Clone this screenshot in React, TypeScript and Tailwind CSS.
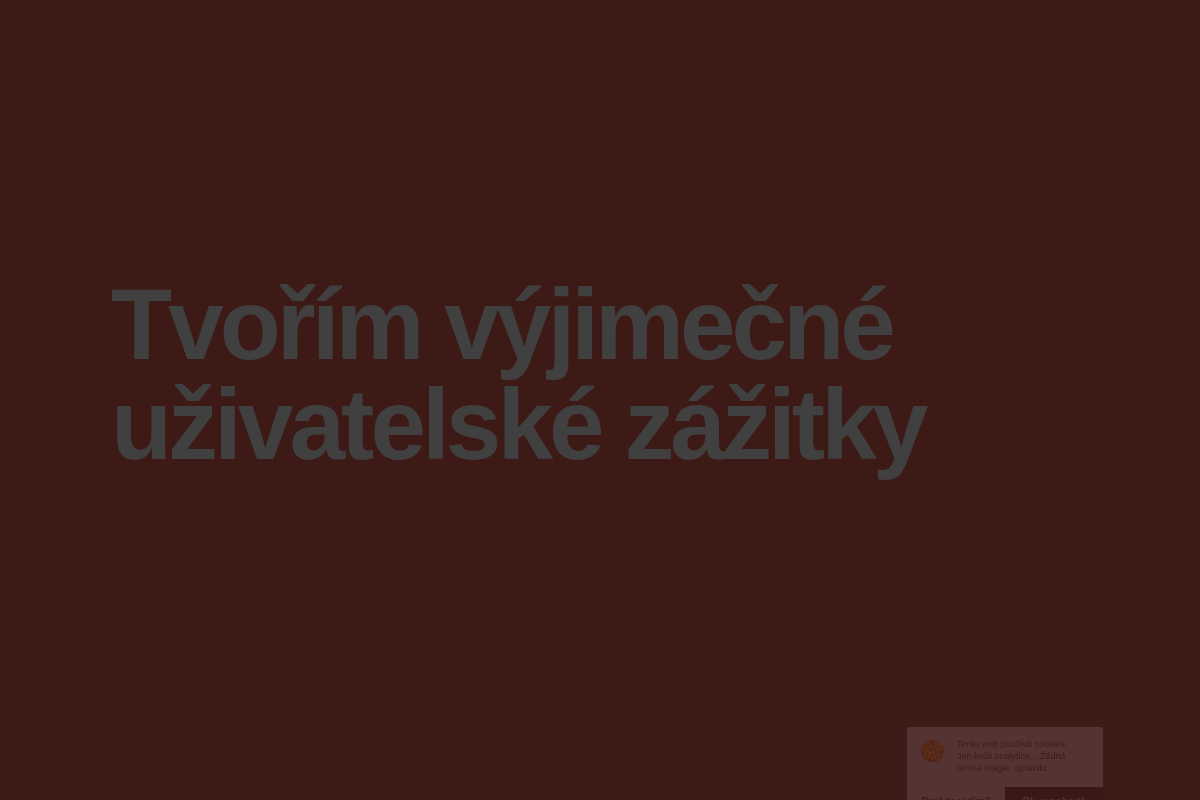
const sections = ["Úvod", "O mně", "Služby", "Práce", "Reference", "Kontakt"];

const crumbs = [
  [9, 7], [19, 9], [6, 12], [11, 11], [17, 14], [22, 14],
  [8, 16], [13, 17], [18, 19], [11, 21], [15, 22], [4, 15], [15, 10],
];

function CookieIcon() {
  return (
    <svg viewBox="0 0 26 26" className="size-[26px] shrink-0" aria-hidden="true">
      <circle cx="13.5" cy="13" r="11.2" fill="#522619" />
      <circle cx="13.5" cy="12.5" r="10" fill="#5b2b19" />
      <circle cx="14" cy="5" r="1.3" fill="none" stroke="#47201b" />
      {crumbs.map(([x, y]) => (
        <circle key={`${x}-${y}`} cx={x} cy={y} r="0.9" fill="#431d19" />
      ))}
    </svg>
  );
}

function CookieNotice() {
  return (
    <aside className="fixed right-[97px] -bottom-[15px] w-[196px] overflow-hidden rounded-t-[3px] bg-[#543432] text-[#3e1b18]">
      <div className="flex items-start gap-3 px-3 pt-[11px] pb-[13px]">
        <CookieIcon />
        <p className="text-[9px] leading-3 whitespace-nowrap">
          Tento web používá cookies.
          <br />
          Jen kvůli analytice... Žádná
          <br />
          temná magie, opravdu.
        </p>
      </div>
      <div className="flex h-7 text-[10px] font-bold">
        <button className="w-[98px]">Proč to vidím?</button>
        <button className="flex-1 bg-[#3a1816] text-[#543432]">Ok, v pohodě</button>
      </div>
    </aside>
  );
}

export default function App() {
  return (
    <div className="flex h-screen flex-col justify-center overflow-hidden bg-[#3e1b17] font-['Liberation_Sans',Arial,sans-serif]">
      <main className="flex items-center pb-9">
        <header className="w-[1016px] bg-[#3d1a16] pt-[18px] pb-[34px] pl-[111px]">
          <h1 className="text-[100px] leading-[100px] font-bold tracking-[-0.04em] text-[#404040]">
            Tvořím výjimečné
            <br />
            uživatelské zážitky
          </h1>
        </header>
        <nav className="ml-auto flex flex-col gap-[19px] pt-9 pr-[49px]">
          {sections.map((name) => (
            <a
              key={name}
              href="#"
              aria-label={name}
              className="size-3.5 rounded-full bg-[#3d1b17]"
            />
          ))}
        </nav>
      </main>
      <CookieNotice />
    </div>
  );
}
